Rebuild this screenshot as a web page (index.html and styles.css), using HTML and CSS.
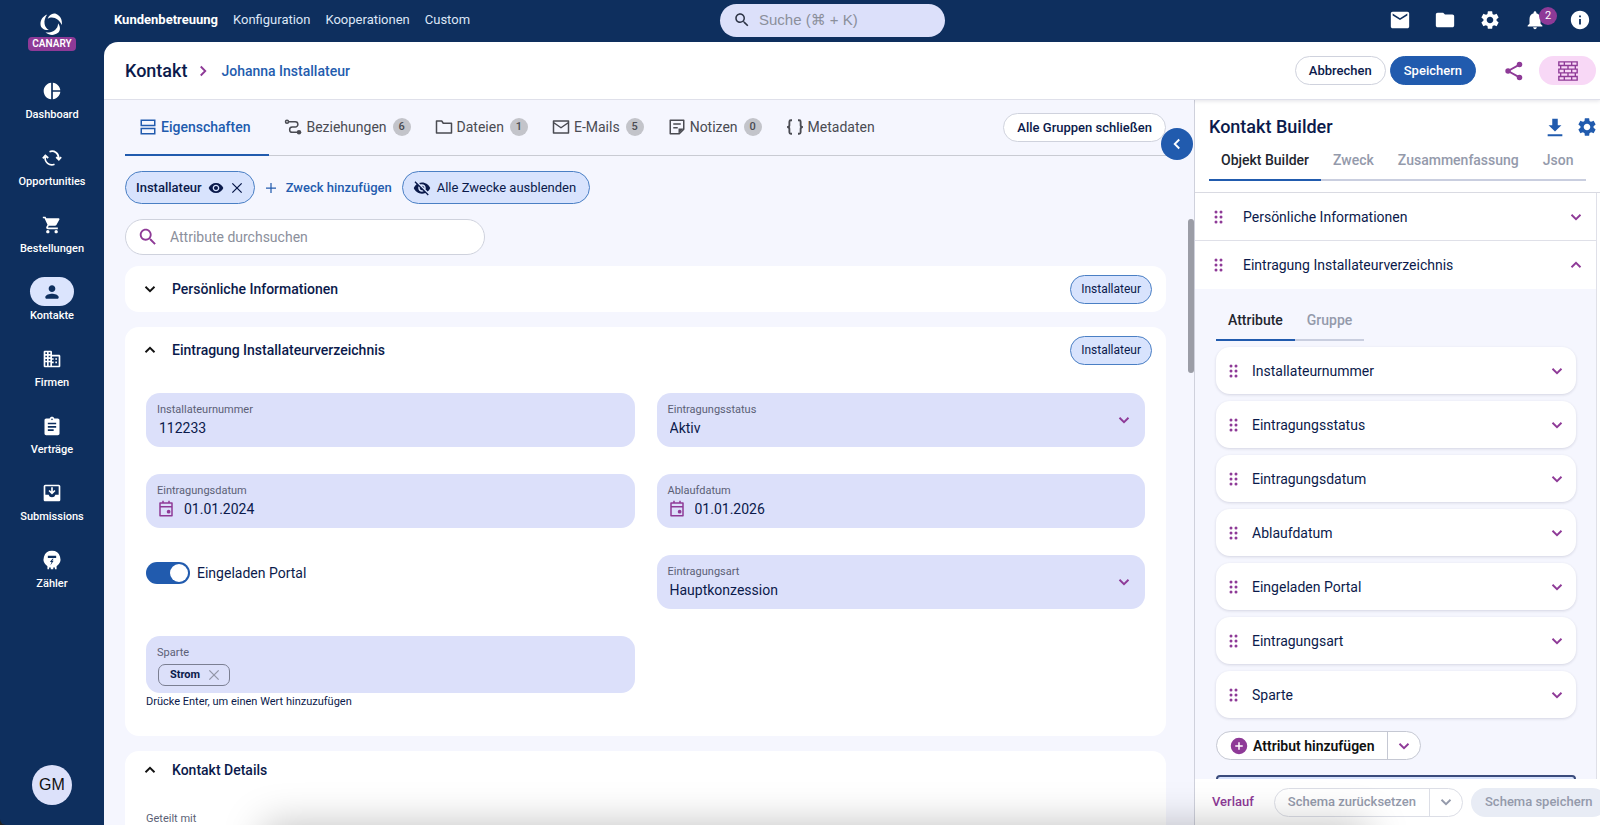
FILE: index.html
```
<!DOCTYPE html>
<html lang="de">
<head>
    <meta charset="UTF-8">
    <meta name="viewport" content="width=device-width, initial-scale=1.0">
    <title>Kontakt - Johanna Installateur</title>
    <link rel="stylesheet" href="styles.css">
</head>
<body>
    <!-- Icon sprite -->
    <svg class="sprite" aria-hidden="true">
        <symbol id="i-logo" viewBox="0 0 24 24">
            <g id="i-logo-arm">
                <path d="M8 7C9.500 3 13.500 0.500 17 2.200C21 4 23.500 8 22.800 13.500C21 10 19 7.500 15.500 6.200C12.800 5.200 10 5.500 8 7Z"/>
            </g>
            <use href="#i-logo-arm" transform="rotate(120 12 12.500)"/>
            <use href="#i-logo-arm" transform="rotate(240 12 12.500)"/>
        </symbol>
        <symbol id="i-dashboard" viewBox="0 0 24 24"><path d="M11 2v20c-5.070-.5-9-4.790-9-10s3.930-9.500 9-10zm2.030 0v8.990H22c-.47-4.740-4.240-8.520-8.970-8.990zm0 11.010V22c4.740-.47 8.500-4.250 8.970-8.990h-8.970z"/></symbol>
        <symbol id="i-cycle" viewBox="0 0 24 24"><path d="M9 4.500a8 8 0 0 1 11 8M4 10.500a8 8 0 0 0 11 9M17 11l3.200 3.200L23 11M1 12.500l3-3.500 3.500 3" fill="none" stroke="currentColor" stroke-width="2"/></symbol>
        <symbol id="i-cart" viewBox="0 0 24 24"><path d="M7 18c-1.100 0-1.990.9-1.990 2S5.900 22 7 22s2-.9 2-2-.9-2-2-2zM1 2v2h2l3.600 7.590-1.350 2.450c-.16.28-.25.61-.25.96 0 1.100.9 2 2 2h12v-2H7.420c-.14 0-.25-.11-.25-.25l.03-.12.9-1.630h7.450c.75 0 1.410-.41 1.750-1.030l3.580-6.490c.08-.14.12-.31.12-.48 0-.55-.45-1-1-1H5.210l-.94-2H1zm16 16c-1.100 0-1.990.9-1.990 2s.89 2 1.990 2 2-.9 2-2-.9-2-2-2z"/></symbol>
        <symbol id="i-person" viewBox="0 0 24 24"><path d="M12 12c2.210 0 4-1.790 4-4s-1.790-4-4-4-4 1.790-4 4 1.790 4 4 4zm0 2c-2.670 0-8 1.340-8 4v1a1 1 0 0 0 1 1h14a1 1 0 0 0 1-1v-1c0-2.660-5.330-4-8-4z"/></symbol>
        <symbol id="i-company" viewBox="0 0 24 24"><path d="M3 2h8l1 1v4h9l1 1v13l-1 1H3l-1-1V3zM4 4v2h2V4zM8 4v2h2V4zM4 8v2h2V8zM8 8v2h2V8zM4 12v2h2v-2zM8 12v2h2v-2zM4 16v4h2v-4zM8 16v4h2v-4zM12 9v2h2v2h-2v2h2v2h-2v3h8V9zM16 11h2v2h-2zM16 15h2v2h-2z" fill-rule="evenodd"/></symbol>
        <symbol id="i-clipboard" viewBox="0 0 24 24"><path d="M19 3h-4.180C14.400 1.840 13.300 1 12 1c-1.300 0-2.400.84-2.820 2H5c-1.100 0-2 .9-2 2v16c0 1.100.9 2 2 2h14c1.100 0 2-.9 2-2V5c0-1.100-.9-2-2-2zm-7 0c.55 0 1 .45 1 1s-.45 1-1 1-1-.45-1-1 .45-1 1-1zm2 15H7v-2h7v2zm3-4H7v-2h10v2zm0-4H7V8h10v2z"/></symbol>
        <symbol id="i-inbox" viewBox="0 0 24 24"><path d="M20 2H4c-1.100 0-2 .9-2 2v16c0 1.100.9 2 2 2h16c1.100 0 2-.9 2-2V4c0-1.100-.9-2-2-2zm0 12h-4c-.5 2-2 3-4 3s-3.500-1-4-3H4V4h16v10z"/><path d="M12 5v7M8.500 9l3.500 3.500L15.500 9" fill="none" stroke="currentColor" stroke-width="2"/></symbol>
        <symbol id="i-meter" viewBox="0 0 24 24"><path fill-rule="evenodd" d="M12 1a10 10 0 0 1 5.500 18.400V23h-2v-2h-2v2h-3v-2h-2v2h-2v-3.600A10 10 0 0 1 12 1zM7 7v2.500h10V7zM12.500 10.500L9.500 14.500h2l-1.500 4 4-5.500h-2l2-2.500z"/></symbol>
        <symbol id="i-search" viewBox="0 0 24 24"><path d="M15.500 14h-.79l-.28-.27C15.410 12.590 16 11.110 16 9.500 16 5.910 13.090 3 9.500 3S3 5.910 3 9.500 5.910 16 9.500 16c1.610 0 3.090-.59 4.230-1.570l.27.28v.79l5 4.990L20.490 19l-4.990-5zm-6 0C7.010 14 5 11.990 5 9.500S7.010 5 9.500 5 14 7.010 14 9.500 11.990 14 9.500 14z"/></symbol>
        <symbol id="i-mail" viewBox="0 0 24 24"><path d="M20 3H4c-1.100 0-1.990.9-1.990 2L2 19c0 1.100.9 2 2 2h16c1.100 0 2-.9 2-2V5c0-1.100-.9-2-2-2zm0 4l-8 5-8-5V5l8 5 8-5v2z"/></symbol>
        <symbol id="i-folder" viewBox="0 0 24 24"><path d="M10 4H4c-1.100 0-1.990.9-1.990 2L2 18c0 1.100.9 2 2 2h16c1.100 0 2-.9 2-2V8c0-1.100-.9-2-2-2h-8l-2-2z"/></symbol>
        <symbol id="i-gear" viewBox="0 0 24 24"><path d="M19.140 12.940c.04-.3.060-.61.060-.94 0-.32-.02-.64-.07-.94l2.030-1.580c.18-.14.23-.41.12-.61l-1.920-3.320c-.12-.22-.37-.29-.59-.22l-2.390.96c-.5-.38-1.030-.7-1.620-.94l-.36-2.540c-.04-.24-.24-.41-.48-.41h-3.840c-.24 0-.43.17-.47.41l-.36 2.540c-.59.24-1.130.57-1.620.94l-2.390-.96c-.22-.08-.47 0-.59.22L2.740 8.870c-.12.21-.08.47.12.61l2.030 1.580c-.05.3-.09.63-.09.94s.02.64.07.94l-2.030 1.580c-.18.14-.23.41-.12.61l1.920 3.320c.12.22.37.29.59.22l2.390-.96c.5.38 1.030.7 1.620.94l.36 2.540c.05.24.24.41.48.41h3.840c.24 0 .44-.17.47-.41l.36-2.540c.59-.24 1.130-.56 1.620-.94l2.390.96c.22.08.47 0 .59-.22l1.920-3.320c.12-.22.07-.47-.12-.61l-2.010-1.580zM12 15.600c-1.980 0-3.600-1.620-3.600-3.600s1.620-3.600 3.600-3.600 3.600 1.620 3.600 3.600-1.620 3.600-3.600 3.600z"/></symbol>
        <symbol id="i-bell" viewBox="0 0 24 24"><path d="M12 22c1.100 0 2-.9 2-2h-4c0 1.100.89 2 2 2zm6-6v-5c0-3.070-1.640-5.640-4.500-6.320V4c0-.83-.67-1.500-1.500-1.500s-1.500.67-1.500 1.500v.68C7.630 5.360 6 7.920 6 11v5l-2 2v1h16v-1l-2-2z"/></symbol>
        <symbol id="i-info" viewBox="0 0 24 24"><path d="M12 2C6.480 2 2 6.480 2 12s4.480 10 10 10 10-4.480 10-10S17.520 2 12 2zm1 15h-2v-6h2v6zm0-8h-2V7h2v2z"/></symbol>
        <symbol id="i-share" viewBox="0 0 24 24"><path d="M18 5L5.500 12 18 19" fill="none" stroke="currentColor" stroke-width="2"/><circle cx="18" cy="5" r="3"/><circle cx="5.500" cy="12" r="3"/><circle cx="18" cy="19" r="3"/></symbol>
        <symbol id="i-bricks" viewBox="0 0 24 24"><path d="M2 2h20v4H2zM4 6h16v4H4zM2 10h20v4H2zM4 14h16v4H4zM2 18h20v4H2zM8 2v4M16 2v4M12 6v4M8 10v4M16 10v4M12 14v4M8 18v4M16 18v4" fill="none" stroke="currentColor" stroke-width="1.500"/></symbol>
        <symbol id="i-chevron-down" viewBox="0 0 24 24"><path d="M6 9l6 6 6-6" fill="none" stroke="currentColor" stroke-width="2.500"/></symbol>
        <symbol id="i-chevron-up" viewBox="0 0 24 24"><path d="M6 15l6-6 6 6" fill="none" stroke="currentColor" stroke-width="2.500"/></symbol>
        <symbol id="i-chevron-right" viewBox="0 0 24 24"><path d="M9 6l6 6-6 6" fill="none" stroke="currentColor" stroke-width="2.500"/></symbol>
        <symbol id="i-chevron-left" viewBox="0 0 24 24"><path d="M15 6l-6 6 6 6" fill="none" stroke="currentColor" stroke-width="2.500"/></symbol>
        <symbol id="i-rows" viewBox="0 0 24 24"><path d="M3 3h18v7H3zM3 14h18v7H3z" fill="none" stroke="currentColor" stroke-width="2"/></symbol>
        <symbol id="i-relations" viewBox="0 0 24 24"><circle cx="4" cy="5" r="2" fill="none" stroke="currentColor" stroke-width="2"/><path d="M6 5h9a3.500 3.500 0 0 1 0 7H11a3.500 3.500 0 0 0 0 7h8" fill="none" stroke="currentColor" stroke-width="2"/><circle cx="20" cy="19" r="3"/></symbol>
        <symbol id="i-folder-o" viewBox="0 0 24 24"><path d="M2 4h7l2 3h11v13H2z" fill="none" stroke="currentColor" stroke-width="2" stroke-linejoin="round"/></symbol>
        <symbol id="i-mail-o" viewBox="0 0 24 24"><path d="M2 4h20v16H2zM2 6l10 7 10-7" fill="none" stroke="currentColor" stroke-width="2" stroke-linejoin="round"/></symbol>
        <symbol id="i-note" viewBox="0 0 24 24"><path d="M3 3h18v12l-6 6H3zM7 8h10M7 13h6" fill="none" stroke="currentColor" stroke-width="2" stroke-linejoin="round"/><path d="M21 14l-7 7v-7z"/></symbol>
        <symbol id="i-braces" viewBox="0 0 24 24"><path d="M8 3H6.500Q4.500 3 4.500 5v4.500Q4.500 12 1.500 12q3 0 3 2.500V19q0 2 2 2H8M16 3h1.500q2 0 2 2v4.500q0 2.500 3 2.500-3 0-3 2.500V19q0 2-2 2H16" fill="none" stroke="currentColor" stroke-width="2.500"/></symbol>
        <symbol id="i-eye" viewBox="0 0 24 24"><path d="M12 4.500C7 4.500 2.730 7.610 1 12c1.730 4.390 6 7.500 11 7.500s9.270-3.110 11-7.500c-1.730-4.390-6-7.500-11-7.500zM12 17c-2.760 0-5-2.240-5-5s2.240-5 5-5 5 2.240 5 5-2.240 5-5 5zm0-8c-1.660 0-3 1.340-3 3s1.340 3 3 3 3-1.340 3-3-1.340-3-3-3z"/></symbol>
        <symbol id="i-eye-off" viewBox="0 0 24 24"><path d="M12 7c2.760 0 5 2.240 5 5 0 .65-.13 1.260-.36 1.830l2.920 2.920c1.510-1.260 2.700-2.890 3.430-4.750-1.730-4.390-6-7.500-11-7.500-1.400 0-2.740.25-3.980.7l2.160 2.160C10.740 7.130 11.350 7 12 7zM2 4.270l2.280 2.280.46.46C3.080 8.300 1.780 10.020 1 12c1.730 4.390 6 7.500 11 7.500 1.550 0 3.030-.3 4.380-.84l.42.42L19.730 22 21 20.730 3.270 3 2 4.270zM7.530 9.800l1.550 1.550c-.05.21-.08.43-.08.65 0 1.660 1.340 3 3 3 .22 0 .44-.03.65-.08l1.550 1.550c-.67.33-1.410.53-2.200.53-2.760 0-5-2.240-5-5 0-.79.2-1.530.53-2.200zm4.310-.78l3.150 3.150.02-.16c0-1.660-1.340-3-3-3l-.17.010z"/></symbol>
        <symbol id="i-close" viewBox="0 0 24 24"><path d="M4 4l16 16M20 4L4 20" fill="none" stroke="currentColor" stroke-width="2.200"/></symbol>
        <symbol id="i-plus" viewBox="0 0 24 24"><path d="M12 2v20M2 12h20" fill="none" stroke="currentColor" stroke-width="2.500"/></symbol>
        <symbol id="i-calendar" viewBox="0 0 24 24"><path d="M4 4h16v17H4zM4 9h16M8 1v3M16 1v3" fill="none" stroke="currentColor" stroke-width="2" stroke-linejoin="round"/><circle cx="15.500" cy="15.500" r="2.500"/></symbol>
        <symbol id="i-download" viewBox="0 0 24 24"><path d="M19 10h-4V3H9v7H5l7 7 7-7zM4 20v2h16v-2H4z"/></symbol>
        <symbol id="i-add-circle" viewBox="0 0 24 24"><path d="M12 1a11 11 0 1 0 0 22 11 11 0 0 0 0-22zm5 12h-4v4h-2v-4H7v-2h4V7h2v4h4v2z"/></symbol>
        <symbol id="i-drag" viewBox="0 0 12 16"><circle cx="3" cy="3" r="1.500"/><circle cx="8" cy="3" r="1.500"/><circle cx="3" cy="8" r="1.500"/><circle cx="8" cy="8" r="1.500"/><circle cx="3" cy="13" r="1.500"/><circle cx="8" cy="13" r="1.500"/></symbol>
    </svg>

    <div class="app">
        <aside class="sidebar">
            <a class="brand" href="#" aria-label="Start">
                <svg class="brand-logo"><use href="#i-logo"/></svg>
                <span class="brand-tag">CANARY</span>
            </a>
            <nav class="side-nav">
                <a class="side-item" href="#"><span class="side-icon"><svg class="icon"><use href="#i-dashboard"/></svg></span>Dashboard</a>
                <a class="side-item" href="#"><span class="side-icon"><svg class="icon"><use href="#i-cycle"/></svg></span>Opportunities</a>
                <a class="side-item" href="#"><span class="side-icon"><svg class="icon"><use href="#i-cart"/></svg></span>Bestellungen</a>
                <a class="side-item active" href="#"><span class="side-icon"><svg class="icon"><use href="#i-person"/></svg></span>Kontakte</a>
                <a class="side-item" href="#"><span class="side-icon"><svg class="icon"><use href="#i-company"/></svg></span>Firmen</a>
                <a class="side-item" href="#"><span class="side-icon"><svg class="icon"><use href="#i-clipboard"/></svg></span>Verträge</a>
                <a class="side-item" href="#"><span class="side-icon"><svg class="icon"><use href="#i-inbox"/></svg></span>Submissions</a>
                <a class="side-item" href="#"><span class="side-icon"><svg class="icon"><use href="#i-meter"/></svg></span>Zähler</a>
            </nav>
            <button class="avatar" type="button">GM</button>
        </aside>

        <div class="main">
            <header class="topbar">
                <nav class="top-nav">
                    <a class="active" href="#">Kundenbetreuung</a>
                    <a href="#">Konfiguration</a>
                    <a href="#">Kooperationen</a>
                    <a href="#">Custom</a>
                </nav>
                <label class="global-search">
                    <svg class="icon"><use href="#i-search"/></svg>
                    <input type="search" placeholder="Suche (⌘ + K)" aria-label="Suche">
                </label>
                <div class="top-actions">
                    <button type="button" aria-label="E-Mails"><svg class="icon-lg"><use href="#i-mail"/></svg></button>
                    <button type="button" aria-label="Dateien"><svg class="icon-lg"><use href="#i-folder"/></svg></button>
                    <button type="button" aria-label="Einstellungen"><svg class="icon-lg"><use href="#i-gear"/></svg></button>
                    <button class="bell" type="button" aria-label="Benachrichtigungen"><svg class="icon-lg"><use href="#i-bell"/></svg><span class="bell-count">2</span></button>
                    <button type="button" aria-label="Info"><svg class="icon-lg"><use href="#i-info"/></svg></button>
                </div>
            </header>

            <div class="page">
                <div class="page-header">
                    <h1>Kontakt</h1>
                    <svg class="icon crumb-arrow"><use href="#i-chevron-right"/></svg>
                    <a class="crumb" href="#">Johanna Installateur</a>
                    <div class="header-actions">
                        <button class="btn" type="button">Abbrechen</button>
                        <button class="btn primary" type="button">Speichern</button>
                        <button class="share" type="button" aria-label="Teilen"><svg class="icon-lg"><use href="#i-share"/></svg></button>
                        <button class="builder-toggle" type="button" aria-label="Builder"><svg class="icon-lg"><use href="#i-bricks"/></svg></button>
                    </div>
                </div>

                <div class="columns">
                    <main class="content">
                        <div class="tabs">
                            <a class="tab active" href="#"><svg class="icon"><use href="#i-rows"/></svg>Eigenschaften</a>
                            <a class="tab" href="#"><svg class="icon"><use href="#i-relations"/></svg>Beziehungen<span class="count">6</span></a>
                            <a class="tab" href="#"><svg class="icon"><use href="#i-folder-o"/></svg>Dateien<span class="count">1</span></a>
                            <a class="tab" href="#"><svg class="icon"><use href="#i-mail-o"/></svg>E-Mails<span class="count">5</span></a>
                            <a class="tab" href="#"><svg class="icon"><use href="#i-note"/></svg>Notizen<span class="count">0</span></a>
                            <a class="tab" href="#"><svg class="icon"><use href="#i-braces"/></svg>Metadaten</a>
                            <button class="btn close-groups" type="button">Alle Gruppen schließen</button>
                        </div>
                        <button class="panel-toggle" type="button" aria-label="Seitenleiste öffnen"><svg class="icon"><use href="#i-chevron-left"/></svg></button>

                        <div class="purposes">
                            <div class="purpose">
                                Installateur
                                <button type="button" aria-label="Anzeigen"><svg class="icon-md"><use href="#i-eye"/></svg></button>
                                <button type="button" aria-label="Entfernen"><svg class="icon-sm"><use href="#i-close"/></svg></button>
                            </div>
                            <button class="add-purpose" type="button"><svg class="icon-xs"><use href="#i-plus"/></svg>Zweck hinzufügen</button>
                            <button class="hide-purposes" type="button"><svg class="icon"><use href="#i-eye-off"/></svg>Alle Zwecke ausblenden</button>
                        </div>

                        <label class="attr-search">
                            <svg class="icon-lg"><use href="#i-search"/></svg>
                            <input type="search" placeholder="Attribute durchsuchen" aria-label="Attribute durchsuchen">
                        </label>

                        <section class="card">
                            <div class="card-header">
                                <svg class="icon"><use href="#i-chevron-down"/></svg>
                                <h2>Persönliche Informationen</h2>
                                <span class="chip">Installateur</span>
                            </div>
                        </section>

                        <section class="card">
                            <div class="card-header">
                                <svg class="icon"><use href="#i-chevron-up"/></svg>
                                <h2>Eintragung Installateurverzeichnis</h2>
                                <span class="chip">Installateur</span>
                            </div>
                            <div class="fields">
                                <div class="field">
                                    <label for="nummer">Installateurnummer</label>
                                    <input type="text" id="nummer" value="112233">
                                </div>
                                <div class="field">
                                    <label for="status">Eintragungsstatus</label>
                                    <select id="status"><option>Aktiv</option></select>
                                    <svg class="icon field-arrow"><use href="#i-chevron-down"/></svg>
                                </div>
                                <div class="field">
                                    <label for="eintragung">Eintragungsdatum</label>
                                    <div class="date">
                                        <svg class="icon"><use href="#i-calendar"/></svg>
                                        <input type="text" id="eintragung" value="01.01.2024">
                                    </div>
                                </div>
                                <div class="field">
                                    <label for="ablauf">Ablaufdatum</label>
                                    <div class="date">
                                        <svg class="icon"><use href="#i-calendar"/></svg>
                                        <input type="text" id="ablauf" value="01.01.2026">
                                    </div>
                                </div>
                                <label class="switch">
                                    <input type="checkbox" checked>
                                    Eingeladen Portal
                                </label>
                                <div class="field">
                                    <label for="art">Eintragungsart</label>
                                    <select id="art"><option>Hauptkonzession</option></select>
                                    <svg class="icon field-arrow"><use href="#i-chevron-down"/></svg>
                                </div>
                                <div class="tag-cell">
                                    <div class="field">
                                        <span class="field-label">Sparte</span>
                                        <div class="tag">
                                            Strom
                                            <button type="button" aria-label="Strom entfernen"><svg class="icon-sm"><use href="#i-close"/></svg></button>
                                        </div>
                                    </div>
                                    <p class="hint">Drücke Enter, um einen Wert hinzuzufügen</p>
                                </div>
                            </div>
                        </section>

                        <section class="card">
                            <div class="card-header compact">
                                <svg class="icon"><use href="#i-chevron-up"/></svg>
                                <h2>Kontakt Details</h2>
                            </div>
                            <p class="shared-with">Geteilt mit</p>
                        </section>
                        <div class="scroll-thumb"></div>
                    </main>

                    <aside class="builder">
                        <div class="builder-head">
                            <div class="builder-title">
                                <h2>Kontakt Builder</h2>
                                <button type="button" aria-label="Herunterladen"><svg class="icon-lg"><use href="#i-download"/></svg></button>
                                <button type="button" aria-label="Einstellungen"><svg class="icon-lg"><use href="#i-gear"/></svg></button>
                            </div>
                            <div class="subtabs">
                                <a class="active" href="#">Objekt Builder</a>
                                <a href="#">Zweck</a>
                                <a href="#">Zusammenfassung</a>
                                <a href="#">Json</a>
                            </div>
                        </div>
                        <div class="builder-body">
                            <div class="group-row"><svg class="drag"><use href="#i-drag"/></svg>Persönliche Informationen<svg class="icon"><use href="#i-chevron-down"/></svg></div>
                            <div class="group-row open"><svg class="drag"><use href="#i-drag"/></svg>Eintragung Installateurverzeichnis<svg class="icon"><use href="#i-chevron-up"/></svg></div>
                            <div class="group-detail">
                                <div class="subtabs">
                                    <a class="active" href="#">Attribute</a>
                                    <a href="#">Gruppe</a>
                                </div>
                                <div class="attributes">
                                    <div class="attribute"><svg class="drag"><use href="#i-drag"/></svg>Installateurnummer<svg class="icon"><use href="#i-chevron-down"/></svg></div>
                                    <div class="attribute"><svg class="drag"><use href="#i-drag"/></svg>Eintragungsstatus<svg class="icon"><use href="#i-chevron-down"/></svg></div>
                                    <div class="attribute"><svg class="drag"><use href="#i-drag"/></svg>Eintragungsdatum<svg class="icon"><use href="#i-chevron-down"/></svg></div>
                                    <div class="attribute"><svg class="drag"><use href="#i-drag"/></svg>Ablaufdatum<svg class="icon"><use href="#i-chevron-down"/></svg></div>
                                    <div class="attribute"><svg class="drag"><use href="#i-drag"/></svg>Eingeladen Portal<svg class="icon"><use href="#i-chevron-down"/></svg></div>
                                    <div class="attribute"><svg class="drag"><use href="#i-drag"/></svg>Eintragungsart<svg class="icon"><use href="#i-chevron-down"/></svg></div>
                                    <div class="attribute"><svg class="drag"><use href="#i-drag"/></svg>Sparte<svg class="icon"><use href="#i-chevron-down"/></svg></div>
                                </div>
                                <div class="split add-attribute">
                                    <button type="button"><svg class="icon"><use href="#i-add-circle"/></svg>Attribut hinzufügen</button>
                                    <button type="button" aria-label="Weitere Optionen"><svg class="icon"><use href="#i-chevron-down"/></svg></button>
                                </div>
                                <div class="next-group"></div>
                            </div>
                        </div>
                        <div class="builder-footer">
                            <a class="history" href="#">Verlauf</a>
                            <div class="split muted">
                                <button type="button">Schema zurücksetzen</button>
                                <button type="button" aria-label="Weitere Optionen"><svg class="icon"><use href="#i-chevron-down"/></svg></button>
                            </div>
                            <button class="save-schema" type="button" disabled>Schema speichern</button>
                        </div>
                    </aside>
                </div>
            </div>
        </div>
        <div class="dock-shadow"></div>
    </div>
</body>
</html>
```
FILE: styles.css
```
* {
    margin: 0;
    padding: 0;
    box-sizing: border-box;
}

body {
    background: #222;
    color: #0b1a4b;
    font-family: Roboto, "Liberation Sans", sans-serif;
    font-size: 14px;
    line-height: 20px;
}

a {
    color: inherit;
    text-decoration: none;
}

button, input, select {
    border: none;
    background: none;
    color: inherit;
    font: inherit;
}

button {
    display: inline-flex;
    align-items: center;
    justify-content: center;
    cursor: pointer;
}

input, select {
    appearance: none;
    outline: none;
    width: 100%;
    min-width: 0;
}

svg {
    display: block;
    flex: none;
    fill: currentColor;
}

.sprite {
    position: absolute;
    width: 0;
    height: 0;
}

.icon {
    width: 18px;
    height: 18px;
}

.icon-xs {
    width: 12px;
    height: 12px;
}

.icon-sm {
    width: 14px;
    height: 14px;
}

.icon-md {
    width: 16px;
    height: 16px;
}

.icon-lg {
    width: 22px;
    height: 22px;
}

.app {
    position: relative;
    display: flex;
    height: 100vh;
    overflow: hidden;
    background: #0e2f5e;
    border-bottom-left-radius: 6px;
}

/* Sidebar */
.sidebar {
    display: flex;
    flex-direction: column;
    align-items: center;
    flex: 0 0 104px;
    padding: 12px 0 20px;
    color: #fff;
}

.brand {
    display: flex;
    flex-direction: column;
    align-items: center;
    gap: 2px;
    margin-bottom: 25px;
}

.brand-logo {
    width: 23px;
    height: 23px;
}

.brand-tag {
    padding: 0 4px;
    border-radius: 4px;
    background: #8e3a97;
    font-size: 10px;
    font-weight: 600;
    line-height: 14px;
}

.side-nav {
    display: flex;
    flex-direction: column;
    gap: 20px;
}

.side-item {
    display: flex;
    flex-direction: column;
    align-items: center;
    gap: 2px;
    font-size: 11px;
    font-weight: 500;
    line-height: 16px;
}

.side-icon {
    display: flex;
    align-items: center;
    justify-content: center;
    width: 44px;
    height: 29px;
    border-radius: 15px;
}

.side-icon .icon {
    width: 20px;
    height: 20px;
}

.side-item.active .side-icon {
    background: #dbe4fd;
    color: #0e2f5e;
}

.avatar {
    width: 40px;
    height: 40px;
    margin-top: auto;
    border-radius: 50%;
    background: #dce1fa;
    color: #111;
    font-family: "Liberation Sans", sans-serif;
    font-size: 16px;
}

/* Top bar */
.main {
    display: flex;
    flex-direction: column;
    flex: 1;
    min-width: 0;
}

.topbar {
    display: grid;
    grid-template-columns: 1fr 225px 1fr;
    align-items: center;
    height: 42px;
    padding: 0 9px 2px 10px;
    color: #fff;
    font-size: 13px;
}

.top-nav {
    display: flex;
    gap: 15px;
    color: #dce6f7;
}

.top-nav .active {
    color: #fff;
    font-weight: 700;
}

.global-search {
    display: flex;
    align-items: center;
    gap: 8px;
    height: 33px;
    margin-left: -20px;
    margin-right: 20px;
    padding: 0 13px;
    border-radius: 17px;
    background: #dce0fa;
    color: #2d3345;
    font-family: "Liberation Sans", "DejaVu Sans", sans-serif;
    font-size: 15px;
}

input::placeholder {
    color: #8b8f9b;
}

.top-actions {
    display: flex;
    justify-content: flex-end;
    gap: 23px;
}

.bell {
    position: relative;
}

.bell-count {
    position: absolute;
    top: -2px;
    left: 15px;
    width: 18px;
    border-radius: 9px;
    background: #8e3a97;
    font-size: 11px;
    line-height: 18px;
}

/* Page */
.page {
    display: flex;
    flex-direction: column;
    flex: 1;
    min-height: 0;
    overflow: hidden;
    border-top-left-radius: 14px;
    background: #fff;
}

.page-header {
    position: relative;
    display: flex;
    align-items: center;
    height: 58px;
    padding: 0 4px 0 21px;
    border-bottom: 1px solid #dfe0ea;
    box-shadow: 0 1px 4px rgba(20, 20, 60, 0.12);
}

h1, .builder-title h2 {
    font-size: 18px;
    font-weight: 500;
    line-height: 24px;
}

.crumb-arrow {
    margin: 0 9px 0 7px;
    color: #8e3a97;
}

.crumb {
    color: #245cae;
    font-weight: 500;
}

.header-actions {
    display: flex;
    align-items: center;
    gap: 4px;
    margin-left: auto;
}

.btn {
    height: 29px;
    padding: 0 13px;
    border: 1px solid #cfd2dd;
    border-radius: 15px;
    background: #fff;
    font-size: 13px;
    font-weight: 500;
}

.btn.primary {
    border-color: #215bae;
    background: #215bae;
    color: #fff;
}

.share {
    margin: 0 10px 0 23px;
    color: #8e3a97;
}

.builder-toggle {
    width: 57px;
    height: 29px;
    border-radius: 15px;
    background: #f8d8f6;
    color: #8e3a97;
}

.columns {
    display: flex;
    flex: 1;
    min-height: 0;
}

.content {
    position: relative;
    display: flex;
    flex-direction: column;
    flex: 1;
    min-width: 0;
    padding: 0 28px 0 21px;
    overflow: hidden;
    background: #f5f6fe;
}

/* Tabs */
.tabs {
    display: flex;
    align-items: center;
    flex: none;
    height: 56px;
    border-bottom: 1px solid #c9cbd3;
    color: #4a4b52;
}

.tab {
    display: flex;
    align-items: center;
    gap: 4px;
    height: 56px;
    padding: 0 0 2px;
    margin-right: 24px;
}

.tab.active {
    padding: 0 19px 0 14px;
    margin-right: 15px;
    border-bottom: 2px solid #215bae;
    color: #215bae;
    font-weight: 500;
}

.count {
    width: 18px;
    margin-left: 2px;
    border-radius: 9px;
    background: #c3c4ca;
    font-size: 11px;
    font-weight: 500;
    line-height: 18px;
    text-align: center;
}

.close-groups {
    margin-left: auto;
    color: #0b1a4b;
}

.panel-toggle {
    position: absolute;
    top: 28px;
    right: 1px;
    width: 32px;
    height: 32px;
    border-radius: 50%;
    background: #215bae;
    color: #fff;
}

/* Purposes */
.purposes {
    display: flex;
    align-items: center;
    flex: none;
    gap: 10px;
    margin-top: 15px;
    font-size: 13px;
}

.purpose, .hide-purposes {
    display: flex;
    align-items: center;
    height: 33px;
    border: 1px solid #4a7fc4;
    border-radius: 17px;
    background: #d8e3fd;
}

.purpose {
    gap: 6px;
    padding: 0 10px;
    font-weight: 500;
}

.add-purpose {
    gap: 9px;
    color: #245cae;
    font-weight: 500;
}

.hide-purposes {
    gap: 6px;
    padding: 0 13px 0 10px;
}

.attr-search {
    display: flex;
    align-items: center;
    flex: none;
    gap: 11px;
    width: 360px;
    height: 36px;
    margin: 15px 0 11px;
    padding: 0 11px;
    border: 1px solid #cfd2dd;
    border-radius: 18px;
    background: #fff;
}

.attr-search svg {
    color: #8e3a97;
}

/* Cards */
.card {
    flex: none;
    margin-bottom: 15px;
    border-radius: 14px;
    background: #fff;
}

.card-header {
    display: flex;
    align-items: center;
    height: 46px;
    padding: 0 14px 0 16px;
}

.card-header.compact {
    height: 38px;
}

.card-header svg {
    color: #111;
}

.card-header h2 {
    margin-left: 13px;
    font-size: 14px;
    font-weight: 500;
}

.chip {
    margin-left: auto;
    padding: 0 10px;
    border: 1px solid #4a7fc4;
    border-radius: 15px;
    background: #d8e3fd;
    font-size: 12px;
    line-height: 27px;
}

.fields {
    display: grid;
    grid-template-columns: 1fr 1fr;
    gap: 27px 22px;
    padding: 20px 21px 25px;
}

.field {
    position: relative;
    min-height: 54px;
    padding: 9px 11px 7px;
    border-radius: 14px;
    background: #dce0fa;
}

.field label, .field-label {
    display: block;
    color: #5b5f76;
    font-size: 11px;
    line-height: 16px;
}

.field input, .field select {
    display: block;
    height: 20px;
    padding-left: 2px;
}

/* The arrow lies over the right end of the select */
.field-arrow {
    position: absolute;
    top: 18px;
    right: 12px;
    color: #8e3a97;
    pointer-events: none;
}

.date {
    display: flex;
    align-items: center;
    gap: 7px;
}

.date svg {
    color: #8e3a97;
}

.switch {
    display: flex;
    align-items: center;
    align-self: start;
    gap: 7px;
    padding-top: 7px;
}

.switch input {
    display: flex;
    width: 44px;
    height: 22px;
    padding: 2px;
    border-radius: 11px;
    background: #215bae;
}

.switch input::before {
    content: "";
    width: 18px;
    height: 18px;
    margin-left: auto;
    border-radius: 50%;
    background: #fff;
}

.tag {
    display: inline-flex;
    align-items: center;
    gap: 7px;
    height: 22px;
    margin: 3px 1px 0;
    padding: 0 8px 0 11px;
    border: 1px solid #7b7f92;
    border-radius: 7px;
    font-size: 11px;
    font-weight: 700;
    vertical-align: top;
}

.tag svg {
    color: #9296a8;
}

.hint {
    font-size: 11px;
    line-height: 18px;
}

.shared-with {
    padding: 22px 21px;
    color: #5b5f76;
    font-size: 11px;
    line-height: 16px;
}

.scroll-thumb {
    position: absolute;
    top: 119px;
    right: 0;
    width: 6px;
    height: 154px;
    border-radius: 3px;
    background: #9b9da6;
}

/* Builder panel */
.builder {
    display: flex;
    flex-direction: column;
    flex: 0 0 406px;
    min-width: 0;
    border-left: 1px solid #cfd1dc;
    background: #fff;
}

.builder-head {
    padding: 15px 2px 11px 14px;
    border-bottom: 1px solid #d9dae2;
}

.builder-title {
    display: flex;
    align-items: center;
    gap: 10px;
    margin-bottom: 9px;
}

.builder-title h2 {
    margin-right: auto;
}

.builder-title button {
    color: #215bae;
}

.subtabs {
    display: inline-flex;
    border-bottom: 2px solid #c9cedf;
    color: #949aab;
    font-weight: 500;
    vertical-align: top;
}

.subtabs a {
    margin-bottom: -2px;
    padding: 2px 12px 9px;
    border-bottom: 2px solid transparent;
}

.subtabs .active {
    border-color: #215bae;
    color: #23262f;
}

.builder-body {
    flex: 1;
    min-height: 0;
    margin-right: 3px;
    overflow: hidden;
    border-right: 1px solid #dfe0e8;
}

.group-row, .attribute {
    display: flex;
    align-items: center;
    height: 47px;
}

.group-row {
    gap: 18px;
    height: 48px;
    padding: 0 11px 0 18px;
    border-bottom: 1px solid #dfe0e8;
}

.group-row.open {
    border-color: #fff;
}

.group-row .icon, .attribute .icon, .split svg {
    color: #8e3a97;
}

.group-row .icon, .attribute .icon {
    margin-left: auto;
}

.drag {
    width: 12px;
    height: 16px;
    color: #8e3a97;
}

.group-detail {
    padding: 19px 20px 0 21px;
    background: #f5f6fe;
}

.attributes {
    display: flex;
    flex-direction: column;
    gap: 7px;
    margin: 6px 0 13px;
}

.attribute {
    gap: 12px;
    padding: 0 10px 0 12px;
    border-radius: 14px;
    background: #fff;
    box-shadow: 0 1px 3px rgba(20, 20, 60, 0.14);
}

.split {
    display: inline-flex;
    height: 29px;
    border: 1px solid #c5c8d3;
    border-radius: 15px;
    background: #fff;
    vertical-align: top;
}

.split button:first-child {
    gap: 5px;
    padding: 0 13px;
    border-right: 1px solid #c5c8d3;
}

.split button:last-child {
    width: 32px;
}

.add-attribute {
    color: #111;
    font-weight: 600;
}

.next-group {
    height: 60px;
    margin-top: 15px;
    border: 2px solid #3a4b7c;
    border-radius: 4px;
    background: #d8e3fd;
}

.builder-footer {
    display: flex;
    align-items: center;
    height: 46px;
    padding-left: 17px;
    overflow: hidden;
    background: #fff;
    font-size: 13px;
    font-weight: 500;
    white-space: nowrap;
}

.history {
    margin-right: 20px;
    color: #8e3a97;
}

.split.muted, .split.muted button, .split.muted svg {
    border-color: #dcdee6;
    color: #949aab;
}

.split.muted {
    flex: none;
}

.save-schema {
    flex: none;
    height: 29px;
    margin-left: 8px;
    padding: 0 14px;
    border-radius: 15px;
    background: #e8ecf5;
    color: #949aab;
}

/* Soft shadow of the dock below the window */
.dock-shadow {
    position: absolute;
    top: 100%;
    left: 17%;
    right: 15%;
    height: 40px;
    box-shadow: 0 8px 40px 8px rgba(0, 0, 0, 0.25);
    pointer-events: none;
}
```
